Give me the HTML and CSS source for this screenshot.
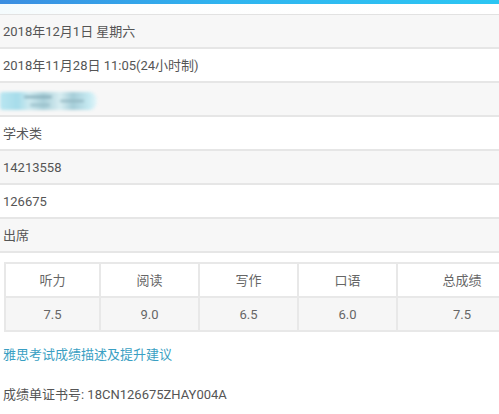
FILE: index.html
```html
<!DOCTYPE html>
<html>
<head>
<meta charset="utf-8">
<link rel="stylesheet" href="styles.css">
</head>
<body>
<div class="topbar"></div>
<div class="strip"></div>
<div class="rows">
  <div class="row gray">2018年12月1日 星期六</div>
  <div class="row">2018年11月28日 11:05(24小时制)</div>
  <div class="row gray"><span class="blur"><span class="streak s1"></span><span class="streak s2"></span><span class="streak s3"></span></span></div>
  <div class="row">学术类</div>
  <div class="row gray">14213558</div>
  <div class="row">126675</div>
  <div class="row gray">出席</div>
</div>
<div class="scores-wrap">
  <div class="scores">
    <div class="cell">听力</div>
    <div class="cell">阅读</div>
    <div class="cell">写作</div>
    <div class="cell">口语</div>
    <div class="cell">总成绩</div>
    <div class="cell val">7.5</div>
    <div class="cell val">9.0</div>
    <div class="cell val">6.5</div>
    <div class="cell val">6.0</div>
    <div class="cell val">7.5</div>
  </div>
</div>
<div class="link">雅思考试成绩描述及提升建议</div>
<div class="cert">成绩单证书号: 18CN126675ZHAY004A</div>
</body>
</html>
```

FILE: styles.css
```css
html, body {
  margin: 0;
  padding: 0;
  background: #fff;
  overflow: hidden;
  width: 499px;
  height: 414px;
}
body {
  font-family: Roboto, "Noto Sans CJK SC", sans-serif;
  font-size: 13px;
  color: #555;
}
.topbar {
  height: 4px;
  background: linear-gradient(90deg, #3b8ee1 0%, #2fb4ef 45%, #2cc6f3 100%);
}
.strip {
  height: 10px;
  background: linear-gradient(90deg, #f4fbfd 0%, #fdfefe 25%, #fff 100%);
  border-bottom: 1px solid #e2e2e2;
}
.row {
  height: 32px;
  line-height: 34px;
  padding-left: 3px;
  border-bottom: 2px solid #e6e6e6;
  background: #fff;
  white-space: nowrap;
  overflow: hidden;
}
.row.gray {
  background: #f7f7f7;
}
.blur {
  position: relative;
  display: inline-block;
  width: 97px;
  height: 18px;
  margin-left: -3px;
  vertical-align: middle;
  background: linear-gradient(90deg, #b9e6f1 0%, #a6dcea 18%, #cde9ef 30%, #a9cfd9 45%, #d8eef2 62%, #a5cdd8 75%, #c6eaf2 92%, #e6f6f9 100%);
  filter: blur(1.5px);
  border-radius: 3px 8px 8px 3px;
}
.streak {
  position: absolute;
  height: 2px;
  background: #7fa7b4;
  border-radius: 1px;
}
.s1 { left: 24px; top: 4px; width: 28px; }
.s2 { left: 60px; top: 8px; width: 24px; background: #8fb4bf; }
.s3 { left: 30px; top: 12px; width: 20px; background: #96bcc7; }
.scores-wrap {
  margin: 9px 0 0 4px;
  width: 495px;
  overflow: hidden;
}
.scores {
  width: 522px;
  display: grid;
  grid-template-columns: 95px 99px 99px 99px 1fr;
  border-top: 2px solid #e8e8e8;
  border-left: 2px solid #e8e8e8;
}
.cell {
  height: 32px;
  line-height: 33px;
  text-align: center;
  border-right: 2px solid #e8e8e8;
  border-bottom: 2px solid #e8e8e8;
  color: #666;
  background: #fff;
}
.cell.val {
  background: #f6f6f6;
}
.link {
  margin: 12px 0 0 3px;
  color: #3a9fc3;
  line-height: 22px;
}
.cert {
  margin: 18px 0 0 3px;
  line-height: 22px;
  color: #555;
}
```
